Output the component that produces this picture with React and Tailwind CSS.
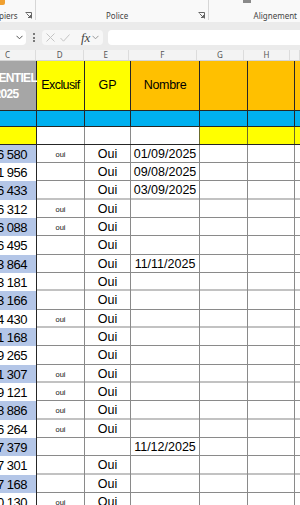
import React from "react";

const rows = [
  ["6 580", "oui", "Oui", "01/09/2025"],
  ["1 956", "", "Oui", "09/08/2025"],
  ["6 433", "", "Oui", "03/09/2025"],
  ["6 312", "oui", "Oui", ""],
  ["6 088", "oui", "Oui", ""],
  ["6 495", "", "Oui", ""],
  ["3 864", "", "Oui", "11/11/2025"],
  ["3 181", "", "Oui", ""],
  ["3 166", "", "Oui", ""],
  ["4 430", "oui", "Oui", ""],
  ["1 168", "", "Oui", ""],
  ["9 265", "", "Oui", ""],
  ["1 307", "oui", "Oui", ""],
  ["9 121", "oui", "Oui", ""],
  ["8 886", "oui", "Oui", ""],
  ["6 264", "oui", "Oui", ""],
  ["7 379", "", "", "11/12/2025"],
  ["7 301", "", "Oui", ""],
  ["7 168", "", "Oui", ""],
  ["0 130", "oui", "Oui", ""],
];

// rows whose bottom line is the light double one
const lightLines = [2, 7, 9, 12, 14, 17];

const cols = "grid grid-cols-[60px_48px_46px_69px_48px_47px_60px]";

function Launcher({ className }) {
  return (
    <svg width="7" height="7" viewBox="0 0 7 7" className={className}>
      <path d="M0.5 0.5h6v6" fill="none" stroke="#666" strokeWidth="1" />
      <path d="M1.5 1.5l4 4M3 5.5h2.5V3" fill="none" stroke="#666" strokeWidth="1" />
    </svg>
  );
}

function Ribbon() {
  return (
    <div className="relative h-[22px] bg-[#f9f9f9] text-[8px] text-[#444] font-['Noto_Sans',sans-serif]">
      <div className="absolute left-0 top-0 h-[5px] w-[5px] rounded-br-[2px] bg-[#f0a030]" />
      <div className="absolute left-[243px] top-0 h-[3px] w-[8px] bg-[#8a8a8a]" />
      <div className="flex h-full">
        <div className="relative flex w-[35px] items-end pb-[2px]">
          <span className="-ml-[1px] leading-none">piers</span>
          <Launcher className="absolute right-[3px] bottom-[3px]" />
        </div>
        <div className="w-px h-[20px] bg-[#d6d6d6]" />
        <div className="relative flex w-[172px] items-end pb-[2px] pl-[70px]">
          <span className="leading-none">Police</span>
          <Launcher className="absolute right-[3px] bottom-[3px]" />
        </div>
        <div className="w-px h-[20px] bg-[#d6d6d6]" />
        <div className="flex flex-1 items-end justify-end pb-[2px] pr-[3px]">
          <span className="leading-none">Alignement</span>
        </div>
      </div>
    </div>
  );
}

function FormulaBar() {
  return (
    <div className="h-[28px] bg-[#ebebeb] pt-[8px]">
      <div className="flex h-[15px] items-center">
        <div className="flex h-full w-[26px] items-center justify-end rounded-r-[4px] bg-white pr-[3px]">
          <svg width="7" height="5" viewBox="0 0 7 5">
            <path d="M0.5 0.8l3 3 3-3" fill="none" stroke="#555" strokeWidth="1" />
          </svg>
        </div>
        <div className="flex w-[16px] flex-col items-center gap-[1.5px]">
          <span className="h-[2px] w-[2px] rounded-full bg-[#555]" />
          <span className="h-[2px] w-[2px] rounded-full bg-[#555]" />
          <span className="h-[2px] w-[2px] rounded-full bg-[#555]" />
        </div>
        <div className="flex h-full w-[61px] items-center gap-[5px] rounded-[4px] bg-[#f7f7f7] pl-[4px]">
          <svg width="9" height="9" viewBox="0 0 9 9">
            <path d="M0.5 0.5l8 8M8.5 0.5l-8 8" stroke="#c4c4c4" strokeWidth="1" />
          </svg>
          <svg width="10" height="8" viewBox="0 0 10 8">
            <path d="M0.5 4l3 3.2 6-6.7" fill="none" stroke="#c4c4c4" strokeWidth="1" />
          </svg>
          <span className="ml-[6px] font-['Liberation_Serif',serif] text-[13px] italic leading-none text-[#444]">
            fx
          </span>
          <svg width="7" height="5" viewBox="0 0 7 5" className="-ml-[3px]">
            <path d="M0.5 0.8l3 3 3-3" fill="none" stroke="#999" strokeWidth="1" />
          </svg>
        </div>
        <div className="ml-[5px] h-full flex-1 rounded-l-[4px] bg-white" />
      </div>
    </div>
  );
}

function ColumnLetters() {
  const letters = [
    ["C", "w-[37px] pl-[5px] text-left"],
    ["D", "w-[48px] text-center"],
    ["E", "w-[46px] text-center"],
    ["F", "w-[69px] text-center"],
    ["G", "w-[48px] text-center"],
    ["H", "w-[47px] text-center"],
    ["", "w-[10px]"],
  ];
  return (
    <div className="flex h-[11px] bg-[#f3f3f3] border-b border-[#d4d4d4] font-['Noto_Sans',sans-serif] text-[8px] leading-[10px] text-[#555]">
      {letters.map(([l, cls], i) => (
        <div key={i} className={`${cls} border-r border-[#dcdcdc]`}>
          {l}
        </div>
      ))}
    </div>
  );
}

export default function App() {
  return (
    <div className="h-[505px] w-[300px] overflow-hidden bg-white">
      <Ribbon />
      <FormulaBar />
      <ColumnLetters />
      <div className="-ml-[23px] w-[378px] font-['Liberation_Sans',sans-serif] text-[12.5px] text-black">
        {/* header */}
        <div className={`${cols} h-[50px] border-b border-[#262626]`}>
          <div className="flex flex-col items-center justify-center border-r border-[#262626] bg-[#a6a6a6] text-[12px] font-bold leading-[16px] tracking-[-0.7px] text-white">
            <span>POTENTIEL</span>
            <span>2025</span>
          </div>
          <div className="flex items-center justify-center border-r border-[#262626] bg-[#ffff00] tracking-[-0.6px]">Exclusif</div>
          <div className="flex items-center justify-center border-r border-[#262626] bg-[#ffff00]">GP</div>
          <div className="flex items-center justify-center border-r border-[#262626] bg-[#ffc000] tracking-[-0.3px]">Nombre</div>
          <div className="border-r border-[#262626] bg-[#ffc000]" />
          <div className="border-r border-[#262626] bg-[#ffc000]" />
          <div className="bg-[#ffc000]" />
        </div>
        {/* blue band */}
        <div className={`${cols} h-[16px] border-b border-[#262626] bg-[#00b0f0]`}>
          {[0, 1, 2, 3, 4, 5, 6].map((i) => (
            <div key={i} className="border-r border-[#262626]" />
          ))}
        </div>
        {/* yellow row */}
        <div className={`${cols} h-[18px] border-b border-[#262626]`}>
          <div className="border-r border-[#262626] bg-[#ffff00]" />
          <div className="border-r border-[#8a8a8a] bg-white" />
          <div className="border-r border-[#8a8a8a] bg-white" />
          <div className="border-r border-[#6b6b2a] bg-white" />
          <div className="border-r border-[#6b6b2a] bg-[#ffff00]" />
          <div className="border-r border-[#6b6b2a] bg-[#ffff00]" />
          <div className="bg-[#ffff00]" />
        </div>
        {/* data */}
        {rows.map(([c, d, e, f], i) => {
          const line = lightLines.includes(i)
            ? "border-b-2 border-b-[#c2c2c2]"
            : "border-b border-b-[#8a8a8a]";
          const h = i % 3 === 2 ? "h-[19px]" : "h-[18px]";
          return (
            <div key={i} className={`${cols} ${h} ${line}`}>
              <div
                className={`flex items-center justify-end border-r border-[#262626] pr-[9px] text-[13px] tracking-[-0.5px] ${
                  i % 2 === 0 ? "bg-[#b4c6e7]" : "bg-white"
                }`}
              >
                {c}
              </div>
              <div className="flex items-center justify-center border-r border-[#8a8a8a] text-[7.5px] text-[#111]">{d}</div>
              <div className="flex items-center justify-center border-r border-[#8a8a8a]">{e}</div>
              <div className="flex items-center justify-center border-r border-[#8a8a8a]">{f}</div>
              <div className="border-r border-[#8a8a8a]" />
              <div className="border-r border-[#8a8a8a]" />
              <div />
            </div>
          );
        })}
      </div>
    </div>
  );
}
